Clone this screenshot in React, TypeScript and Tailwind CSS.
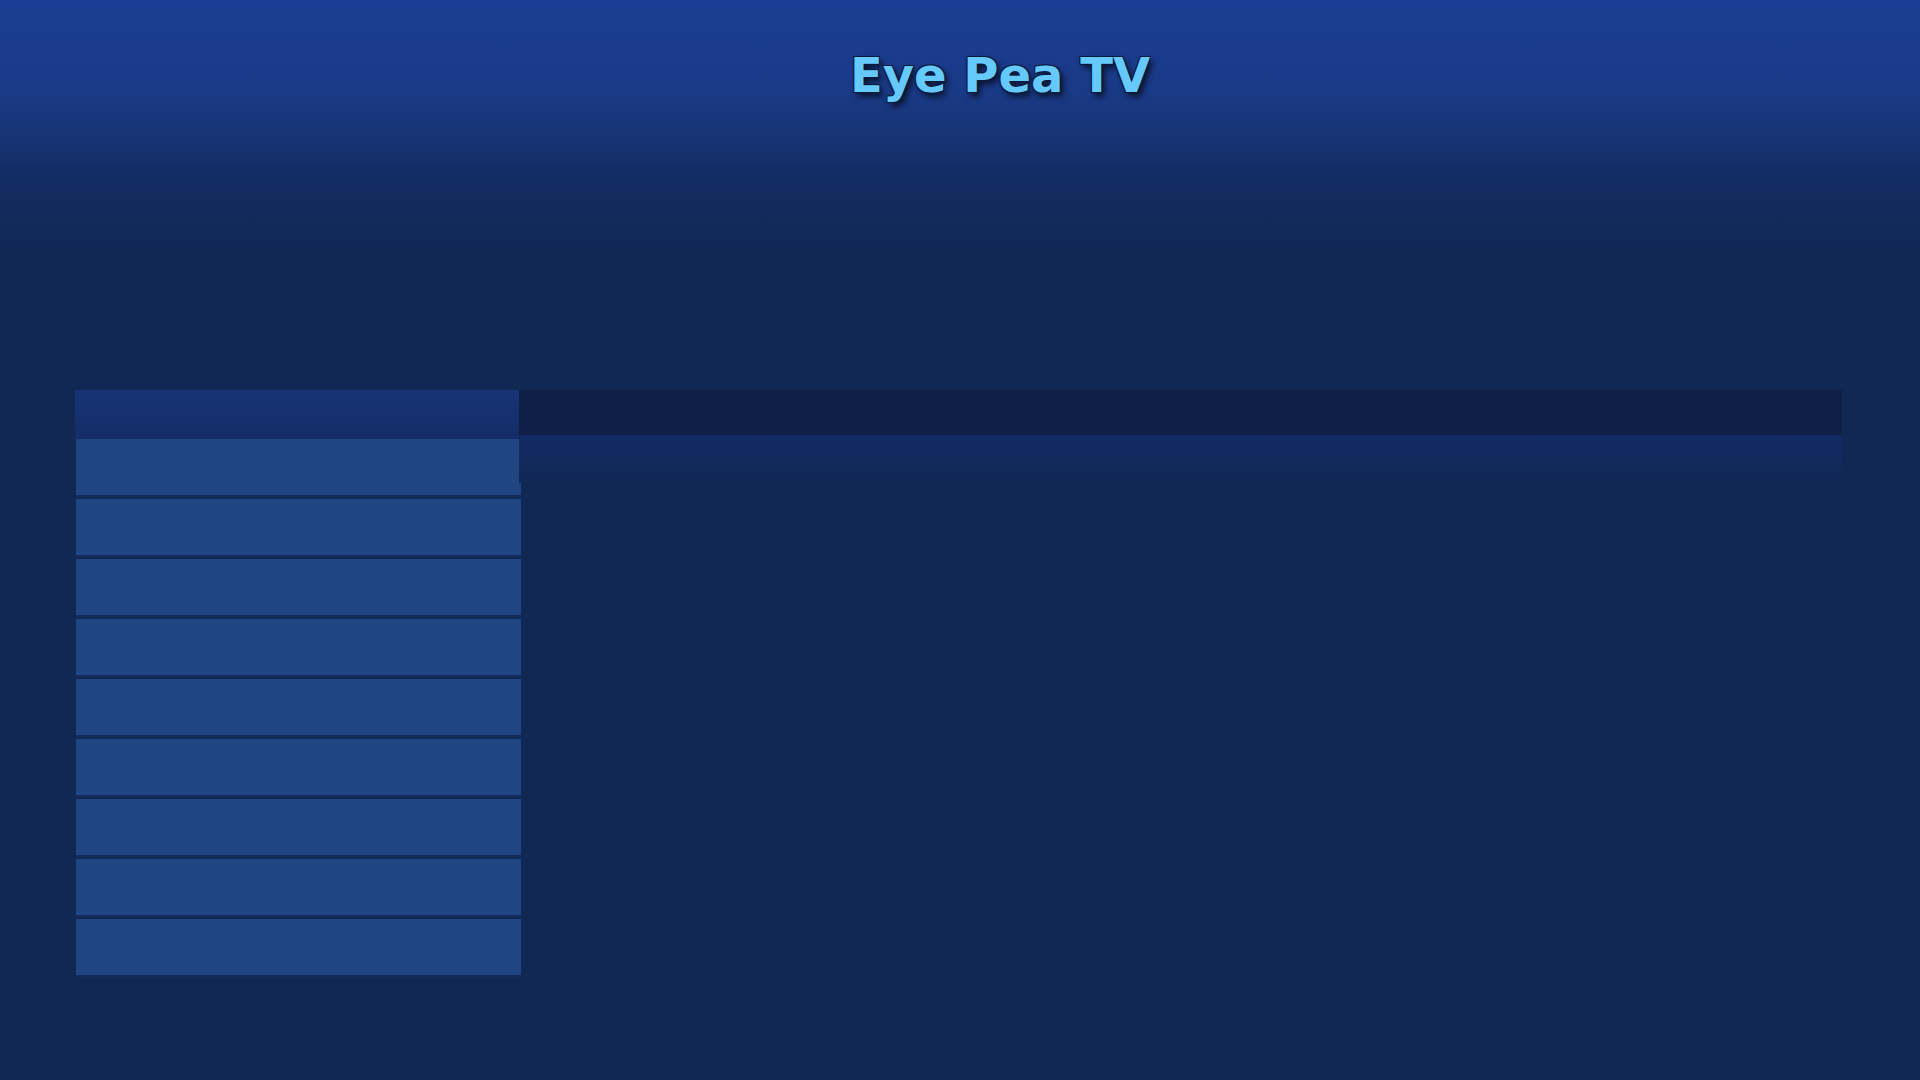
import React from 'react';

const ITEMS = Array.from({ length: 9 }, (_, i) => i);

const App: React.FC = () => {
  return (
    <div className="min-h-screen w-full bg-[linear-gradient(to_bottom,#1b3e93_0px,#1a3a87_90px,#132d62_180px,#112855_250px,#112855_100%)] font-['DejaVu_Sans',sans-serif]">
      <header className="h-[390px] pt-[51px] flex justify-center pl-[80px]">
        <h1
          className="text-[48px] leading-[48px] font-bold text-[#66c9fc] select-none"
          style={{
            textShadow:
              '-1px -1px 0 #0a1a3a, 1px -1px 0 #0a1a3a, -1px 1px 0 #0a1a3a, 1px 1px 0 #0a1a3a, 3px 4px 6px rgba(0,0,0,0.75)',
          }}
        >
          Eye Pea TV
        </h1>
      </header>

      <main className="ml-[75px] w-[1767px] flex items-start">
        <div className="w-[444px] flex flex-col shrink-0">
          <div className="h-[49px] bg-[linear-gradient(to_bottom,#183475,#142d68)]" />
          <ul className="flex flex-col gap-[4px] pl-px w-[446px]">
            {ITEMS.map((i) => (
              <li key={i} className="h-[56px] w-[445px] bg-[#1f4582] shadow-[0_2px_0_#142c5c]" />
            ))}
          </ul>
        </div>
        <div className="flex-1 flex flex-col">
          <div className="h-[45px] bg-[#0f1f45]" />
          <div className="h-[48px] bg-[linear-gradient(to_bottom,#132b64,#112855)]" />
        </div>
      </main>
    </div>
  );
};

export default App;
